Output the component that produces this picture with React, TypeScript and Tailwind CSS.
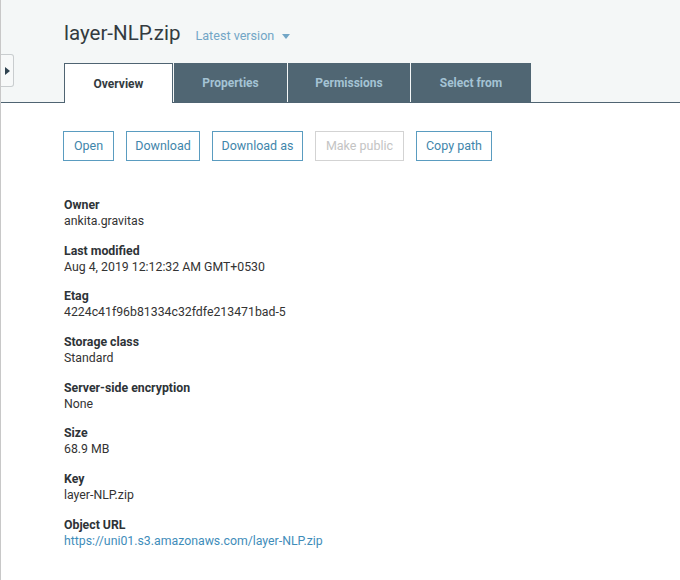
import React from "react";

const tabs = [
  { label: "Overview", w: "w-[109px]", active: true },
  { label: "Properties", w: "w-[113px]", active: false },
  { label: "Permissions", w: "w-[122px]", active: false },
  { label: "Select from", w: "w-[120px]", active: false },
];

const buttons = [
  { label: "Open", w: "w-[51px]", disabled: false },
  { label: "Download", w: "w-[74px]", disabled: false },
  { label: "Download as", w: "w-[91px]", disabled: false },
  { label: "Make public", w: "w-[89px]", disabled: true },
  { label: "Copy path", w: "w-[76px]", disabled: false },
];

const details = [
  { label: "Owner", value: "ankita.gravitas" },
  { label: "Last modified", value: "Aug 4, 2019 12:12:32 AM GMT+0530" },
  { label: "Etag", value: "4224c41f96b81334c32fdfe213471bad-5" },
  { label: "Storage class", value: "Standard" },
  { label: "Server-side encryption", value: "None" },
  { label: "Size", value: "68.9 MB" },
  { label: "Key", value: "layer-NLP.zip" },
  { label: "Object URL", value: "https://uni01.s3.amazonaws.com/layer-NLP.zip", link: true },
];

export default function App() {
  return (
    <div className="relative w-[680px] h-[580px] overflow-hidden bg-white border-l border-[#c8c8c8] font-['Roboto',sans-serif]">
      {/* side panel toggle */}
      <div className="absolute left-0 top-[54px] w-[13px] h-[33px] bg-[#f7f9f9] border border-l-0 border-[#c9cdcf] rounded-r-[3px] flex items-center justify-center">
        <span className="w-0 h-0 border-y-[4px] border-y-transparent border-l-[5px] border-l-[#2f4350]" />
      </div>

      {/* header */}
      <div className="bg-[#f4f7f7] pl-[63px] border-b border-[#4f6472]">
        <div className="pt-[21px] flex items-baseline h-[45px]">
          <h1 className="text-[20.5px] leading-[24px] text-[#333b40]">layer-NLP.zip</h1>
          <button className="ml-[15px] flex items-center text-[12.6px] text-[#72a6c6]">
            Latest version
            <span className="ml-[8px] w-0 h-0 border-x-[4px] border-x-transparent border-t-[5px] border-t-[#72a6c6]" />
          </button>
        </div>
        <div className="mt-[18px] flex gap-px h-[39px]">
          {tabs.map((t) =>
            t.active ? (
              <div
                key={t.label}
                className={`${t.w} -mb-px bg-white border border-b-0 border-[#4f6472] flex items-center justify-center text-[12px] font-bold text-[#333b40]`}
              >
                {t.label}
              </div>
            ) : (
              <div
                key={t.label}
                className={`${t.w} bg-[#506673] flex items-center justify-center text-[12px] font-bold text-[#a4c3d4]`}
              >
                {t.label}
              </div>
            )
          )}
        </div>
      </div>

      {/* actions */}
      <div className="pl-[62px] pt-[28px] flex gap-[12px]">
        {buttons.map((b) => (
          <button
            key={b.label}
            className={`${b.w} h-[30px] border text-[12.5px] flex items-center justify-center ${
              b.disabled ? "border-[#d3d3d3] text-[#c4c4c4]" : "border-[#5a9cc0] text-[#3f86ab]"
            }`}
          >
            {b.label}
          </button>
        ))}
      </div>

      {/* details */}
      <div className="pl-[63px] mt-[36px] flex flex-col gap-[13.7px]">
        {details.map((d) => (
          <div key={d.label} className="text-[12.3px] leading-[16px]">
            <div className="font-bold text-[#2e3337]">{d.label}</div>
            <div className={d.link ? "text-[#3f8dba]" : "text-[#333]"}>{d.value}</div>
          </div>
        ))}
      </div>
    </div>
  );
}
